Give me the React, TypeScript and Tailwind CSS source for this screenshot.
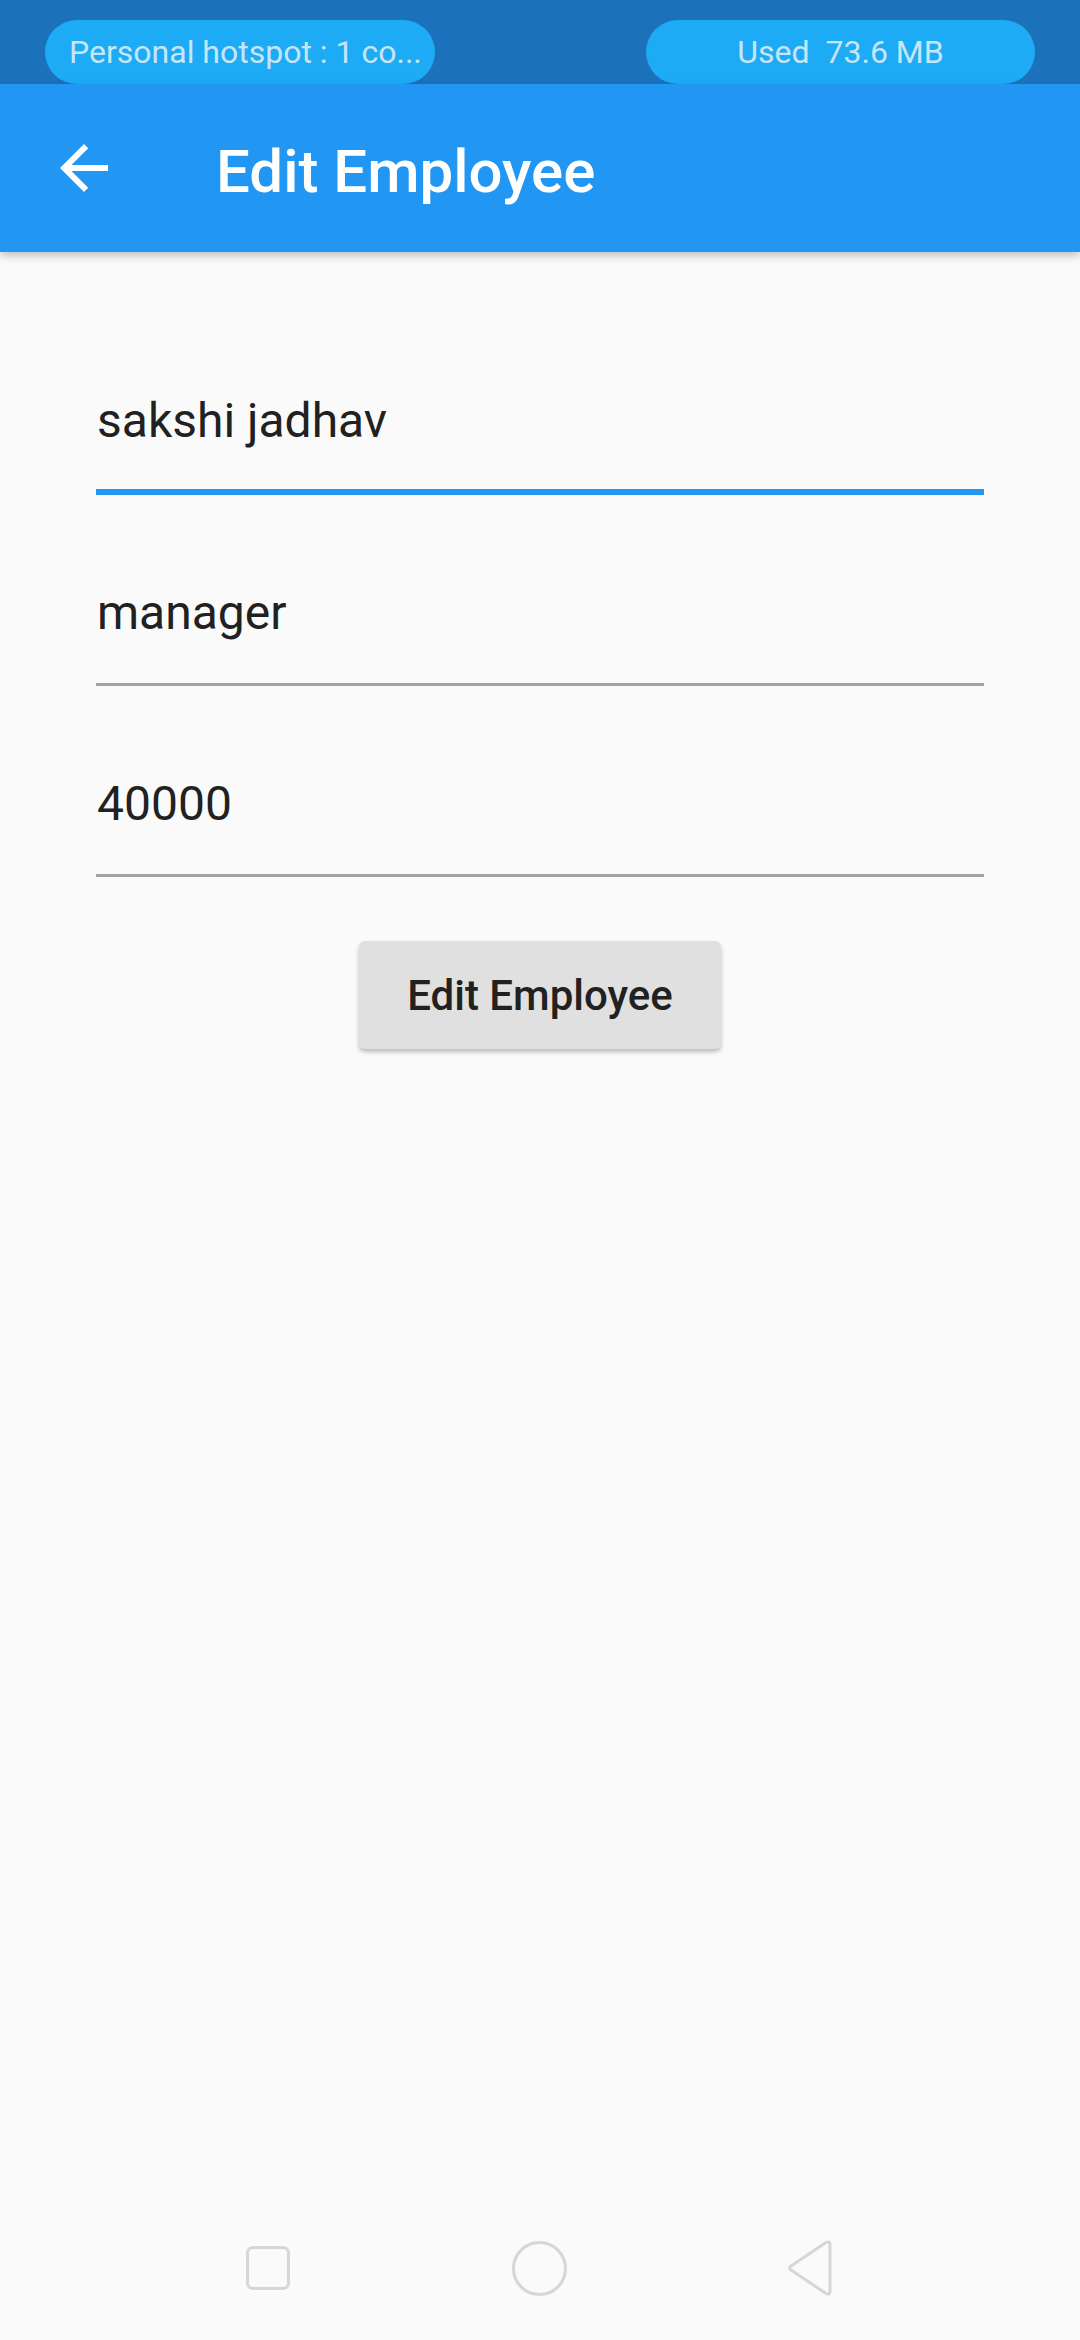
import React from "react";

const font = { fontFamily: "Roboto, 'Noto Sans', sans-serif" };

function StatusBar() {
	return (
		<div className="h-[84px] bg-[#1B72BA] flex justify-between px-[45px] pt-[20px]">
			<div className="h-[64px] w-[390px] rounded-full bg-[#1EABF5] flex items-center pl-[24px] pr-[8px] overflow-hidden">
				<span className="text-[32px] leading-[40px] text-[#C5E6F8] whitespace-nowrap">Personal hotspot : 1 co...</span>
			</div>
			<div className="h-[64px] w-[389px] rounded-full bg-[#1EABF5] flex items-center justify-center">
				<span className="text-[32px] leading-[40px] text-[#C5E6F8] whitespace-pre">Used  73.6 MB</span>
			</div>
		</div>
	);
}

function AppBar() {
	return (
		<div className="relative z-10 h-[168px] bg-[#2196F3] flex items-center shadow-[0_4px_8px_rgba(0,0,0,0.22)]">
			<svg className="ml-[48px] w-[72px] h-[72px] shrink-0" viewBox="0 0 24 24" fill="#ffffff">
				<path d="M20 11H7.83l5.59-5.59L12 4l-8 8 8 8 1.41-1.41L7.83 13H20v-2z" />
			</svg>
			<h1 className="ml-[96px] mt-[7px] text-[60px] leading-[60px] font-medium text-white">Edit Employee</h1>
		</div>
	);
}

function Field({ value, focused, pt, pb }: { value: string; focused?: boolean; pt: string; pb: string }) {
	return (
		<div
			className={
				focused
					? `${pt} ${pb} border-b-[6px] border-[#2196F3]`
					: `${pt} ${pb} border-b-[3px] border-[#A3A3A3]`
			}
		>
			<div className="h-[48px] text-[48px] leading-[48px] text-[#212121] pl-[1px]">{value}</div>
		</div>
	);
}

function NavBar() {
	return (
		<div className="h-[144px] flex items-center justify-center">
			<div className="flex items-center">
				<div className="w-[44px] h-[44px] rounded-[7px] border-[3px] border-[#D6D6D6]" />
				<div className="ml-[222px] w-[55px] h-[55px] rounded-full border-[3px] border-[#D6D6D6]" />
				<svg className="ml-[219px] w-[48px] h-[56px]" viewBox="0 0 48 56" fill="none">
					<path
						d="M5 26 L40 2.5 Q44 0.5 44 5 L44 51 Q44 55.5 40 53.5 L5 30 Q2 28 5 26 Z"
						stroke="#D6D6D6"
						strokeWidth="3"
						strokeLinejoin="round"
					/>
				</svg>
			</div>
		</div>
	);
}

export default function App() {
	return (
		<div className="w-[1080px] h-[2340px] bg-[#FAFAFA] flex flex-col overflow-hidden" style={font}>
			<StatusBar />
			<AppBar />
			<main className="flex-1 px-[96px] flex flex-col">
				<Field value="sakshi jadhav" focused pt="pt-[145px]" pb="pb-[44px]" />
				<Field value="manager" pt="pt-[94px]" pb="pb-[46px]" />
				<Field value="40000" pt="pt-[94px]" pb="pb-[46px]" />
				<div className="flex justify-center mt-[64px]">
					<button className="h-[108px] w-[362px] rounded-[6px] bg-[#E0E0E0] text-[42px] font-medium text-[#212121] shadow-[0_3px_4px_rgba(0,0,0,0.25)]">
						Edit Employee
					</button>
				</div>
			</main>
			<NavBar />
		</div>
	);
}
